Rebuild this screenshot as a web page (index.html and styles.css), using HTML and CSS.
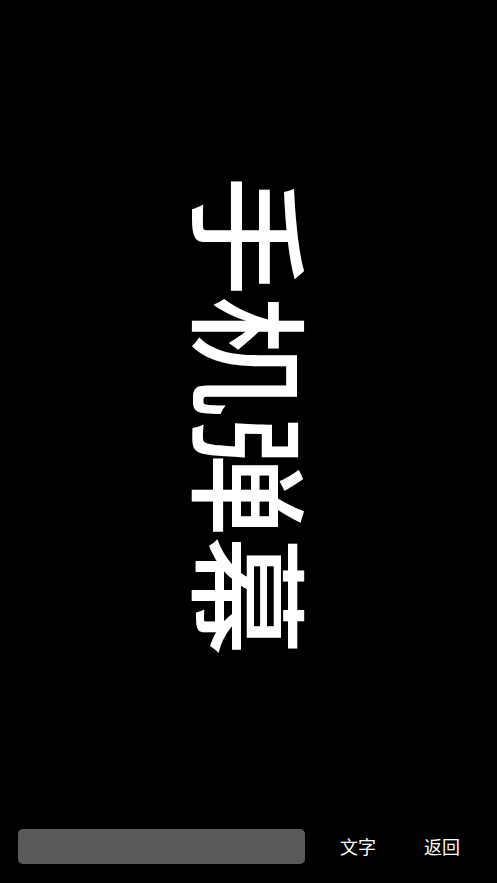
FILE: index.html
```html
<!DOCTYPE html>
<html lang="zh">
<head>
<meta charset="utf-8">
<title>手机弹幕</title>
<link rel="stylesheet" href="styles.css">
</head>
<body>
<div class="app">
  <div class="stage">
    <div class="danmu">手机弹幕</div>
  </div>
  <div class="bar">
    <div class="input"></div>
    <div class="btn">文字</div>
    <div class="btn">返回</div>
  </div>
</div>
</body>
</html>
```
FILE: styles.css
```css
html, body {
  margin: 0;
  padding: 0;
  background: #000;
  height: 100%;
}
.app {
  height: 883px;
  display: flex;
  flex-direction: column;
  font-family: "Noto Sans CJK SC", "Noto Sans", sans-serif;
  color: #fff;
}
.stage {
  flex: 1;
  display: flex;
  align-items: center;
  justify-content: center;
  overflow: hidden;
  padding-top: 2px;
}
.danmu {
  font-size: 120px;
  line-height: 120px;
  font-weight: 500;
  white-space: nowrap;
  transform: translateX(5px) rotate(90deg);
}
.bar {
  display: flex;
  align-items: center;
  padding: 0 13px 19px 18px;
}
.input {
  width: 287px;
  height: 35px;
  border-radius: 5px;
  background: #5a5a5a;
  margin-right: 11px;
}
.btn {
  width: 84px;
  text-align: center;
  font-size: 18px;
  line-height: 35px;
  font-weight: 400;
}
```
